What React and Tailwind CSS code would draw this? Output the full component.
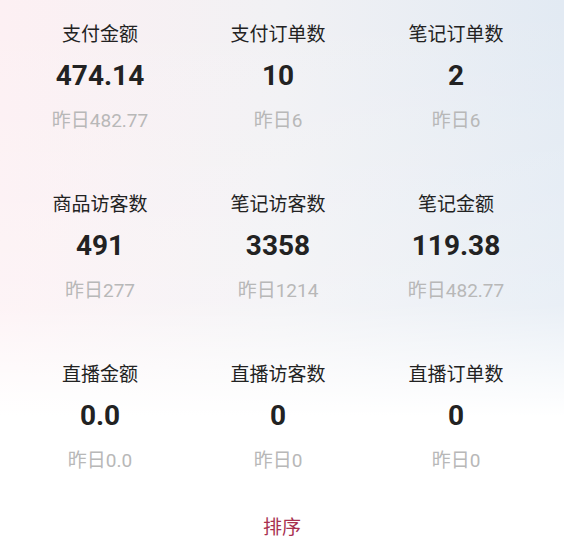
const stats = [
  { label: "支付金额", value: "474.14", prev: "昨日482.77" },
  { label: "支付订单数", value: "10", prev: "昨日6" },
  { label: "笔记订单数", value: "2", prev: "昨日6" },
  { label: "商品访客数", value: "491", prev: "昨日277" },
  { label: "笔记访客数", value: "3358", prev: "昨日1214" },
  { label: "笔记金额", value: "119.38", prev: "昨日482.77" },
  { label: "直播金额", value: "0.0", prev: "昨日0.0" },
  { label: "直播访客数", value: "0", prev: "昨日0" },
  { label: "直播订单数", value: "0", prev: "昨日0" },
];

const StatCell = ({ label, value, prev }) => (
  <div className="flex flex-col items-center h-[170px]">
    <span className="mt-[23px] text-[19px] leading-[24px] text-[#222]">{label}</span>
    <span className="mt-[12px] text-[28px] leading-[34px] font-bold text-[#222]">{value}</span>
    <span className="mt-[16px] text-[19px] leading-[24px] text-[#b8b8b8]">{prev}</span>
  </div>
);

export default function App() {
  return (
    <div
      className="w-[564px] h-[555px] bg-gradient-to-r from-[#fdf0f3] via-[#f1f1f4] to-[#e2eaf3]"
      style={{ fontFamily: 'Roboto, "Noto Sans CJK SC", sans-serif' }}
    >
      <div className="h-full bg-gradient-to-b from-transparent via-[#ffffff40] via-55% to-white to-75%">
        <div className="grid grid-cols-3 pl-[11px] pr-[19px]">
          {stats.map((s) => (
            <StatCell key={s.label} {...s} />
          ))}
        </div>
        <div className="flex justify-center mt-[6px]">
          <span className="text-[19px] leading-[24px] text-[#a8304f]">排序</span>
        </div>
      </div>
    </div>
  );
}
